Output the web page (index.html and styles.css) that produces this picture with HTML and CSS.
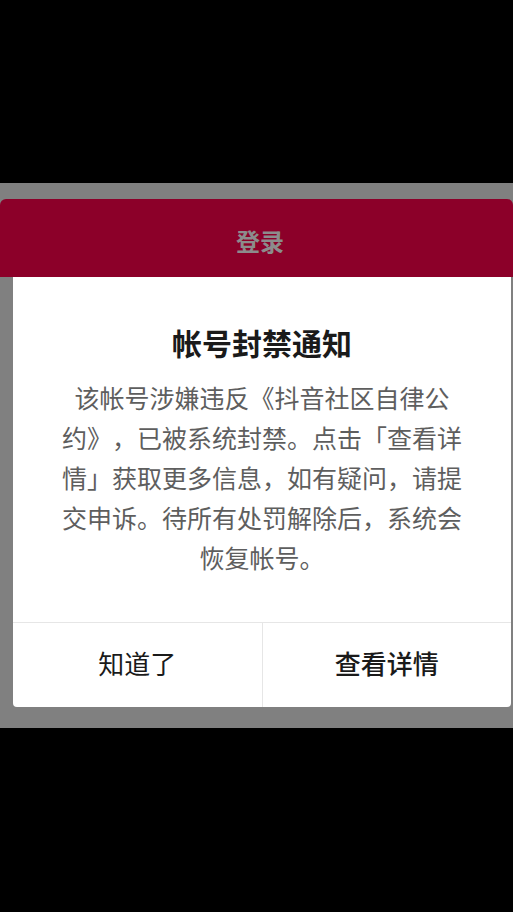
FILE: index.html
```html
<!DOCTYPE html>
<html lang="zh-CN">
<head>
<meta charset="utf-8">
<title>帐号封禁通知</title>
<link rel="stylesheet" href="styles.css">
</head>
<body>
<div class="top-black"></div>
<div class="screen">
  <div class="login-bar"><span class="login-text">登录</span></div>
  <div class="dialog">
    <div class="dialog-body">
      <h1 class="dialog-title">帐号封禁通知</h1>
      <p class="dialog-text">该帐号涉嫌违反《抖音社区自律公约》，已被系统封禁。点击「查看详情」获取更多信息，如有疑问，请提交申诉。待所有处罚解除后，系统会恢复帐号。</p>
    </div>
    <div class="dialog-actions">
      <div class="btn btn-left">知道了</div>
      <div class="btn btn-right">查看详情</div>
    </div>
  </div>
</div>
</body>
</html>
```

FILE: styles.css
```css
html, body {
  margin: 0;
  padding: 0;
  background: #000;
  width: 513px;
  height: 912px;
  overflow: hidden;
  font-family: "Noto Sans CJK SC", "Noto Sans", sans-serif;
  text-spacing-trim: space-all;
}
.top-black {
  height: 183px;
}
.screen {
  height: 545px;
  background: #808080;
  padding-top: 16px;
  box-sizing: border-box;
  display: flex;
  flex-direction: column;
}
.login-bar {
  height: 78px;
  background: #8c0029;
  border-radius: 6px 6px 0 0;
  display: flex;
  align-items: center;
  justify-content: center;
}
.login-text {
  color: #8c8c8c;
  font-size: 24px;
  font-weight: 700;
  line-height: 1;
  margin: 6px 0 0 7px;
}
.dialog {
  margin: 0 2px 0 13px;
  background: #fff;
  border-radius: 0 0 4px 4px;
  display: flex;
  flex-direction: column;
}
.dialog-body {
  padding: 44px 40px 45px;
  text-align: center;
  border-bottom: 1px solid #e6e6e6;
}
.dialog-title {
  margin: 0 0 14px;
  font-size: 30px;
  font-weight: 700;
  line-height: 42px;
  color: #1a1a1a;
}
.dialog-text {
  margin: 0;
  font-size: 25px;
  line-height: 40px;
  color: #5e5e5e;
  text-spacing-trim: space-all;
}
.dialog-actions {
  display: flex;
  height: 84px;
}
.btn {
  flex: 1;
  display: flex;
  align-items: center;
  justify-content: center;
  font-size: 26px;
  color: #1a1a1a;
  padding-bottom: 6px;
}
.btn-left {
  border-right: 1px solid #e6e6e6;
}
.btn-right {
  font-weight: 500;
}
```
